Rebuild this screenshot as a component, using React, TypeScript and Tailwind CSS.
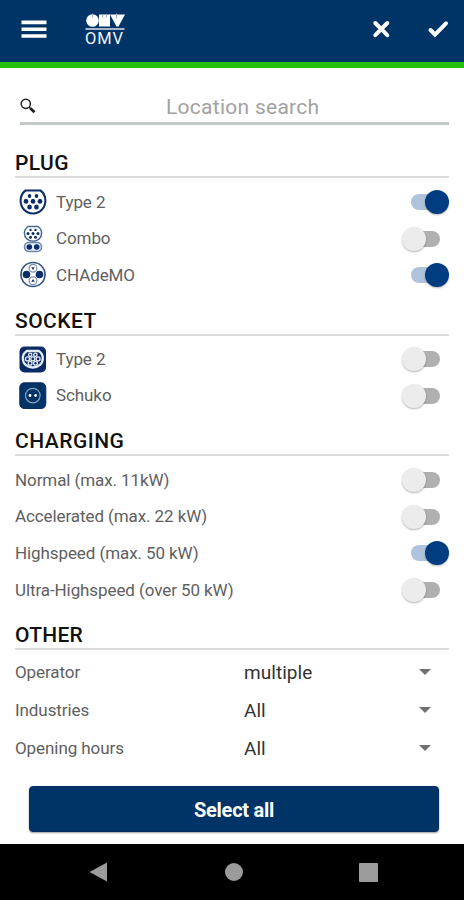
import type { ReactNode } from "react";

const FONT = "font-[Roboto,'Liberation_Sans',sans-serif]";
const NAVY = "#003366";
const INK = "#0b2d69";

function OmvLogo() {
  return (
    <div className="ml-[38px] flex w-[42px] flex-col">
      <svg className="h-[17px] w-[42px]" viewBox="0 0 42 17" fill="#fff">
        <circle cx="7.500" cy="7.500" r="6.300" />
        <path d="M14 1.500h11v12H14z" />
        <path d="M25 1.500h15L33.500 13.500h-2z" />
        <path d="M7.500 0.500v4M17.700 1.500v3M21.300 1.500v3M31.500 0.500v5" stroke="#9fb0cc" strokeWidth="1" />
        <path d="M0.500 16h39" stroke="#dbe2f0" strokeWidth="1.400" />
      </svg>
      <span className="h-[16px] text-[16.500px] leading-[17px] tracking-[0.900px] whitespace-nowrap text-[#f0f4fa]">OMV</span>
    </div>
  );
}

function Type2Plug() {
  return (
    <svg className="h-[28px] w-[28px]" viewBox="0 0 30 28" preserveAspectRatio="none">
      <path d="M7 2.500h16c3.300 2.300 5.300 5.900 5.300 10C28.300 20 22.500 25.500 15 25.500S1.700 20 1.700 12.500C1.700 8.400 3.700 4.800 7 2.500z" fill="#fff" stroke={INK} strokeWidth="2.200" />
      <g fill={INK}>
        <circle cx="11.300" cy="8" r="1.900" />
        <circle cx="18.700" cy="8" r="1.900" />
        <circle cx="7.500" cy="13.300" r="2.500" />
        <circle cx="15" cy="13.300" r="2.500" />
        <circle cx="22.500" cy="13.300" r="2.500" />
        <circle cx="11.300" cy="19" r="2.500" />
        <circle cx="18.700" cy="19" r="2.500" />
      </g>
    </svg>
  );
}

function ComboPlug() {
  return (
    <svg className="h-[28px] w-[20px]" viewBox="0 0 20 28">
      <path d="M5 1.500h10c2.400 1.700 3.600 3.900 3.600 6.500 0 4.900-3.700 8.200-8.600 8.200S1.400 12.900 1.400 8C1.400 5.400 2.600 3.200 5 1.500z" fill="#fff" stroke="#476792" strokeWidth="1.500" />
      <rect x="1.500" y="17.500" width="17" height="9" rx="4.200" fill="#e6edf5" stroke="#6d87a8" strokeWidth="1.500" />
      <g fill={INK}>
        <circle cx="7.500" cy="4.900" r="1.200" />
        <circle cx="12.500" cy="4.900" r="1.200" />
        <circle cx="5" cy="8.500" r="1.500" />
        <circle cx="10" cy="8.500" r="1.500" />
        <circle cx="15" cy="8.500" r="1.500" />
        <circle cx="7.500" cy="12.300" r="1.500" />
        <circle cx="12.500" cy="12.300" r="1.500" />
        <circle cx="6.300" cy="22" r="2.800" />
        <circle cx="13.700" cy="22" r="2.800" />
      </g>
    </svg>
  );
}

function ChademoPlug() {
  return (
    <svg className="h-[28px] w-[28px]" viewBox="0 0 28 28">
      <circle cx="14" cy="13.500" r="12" fill="#fff" stroke="#365781" strokeWidth="1.700" />
      <circle cx="14" cy="7.300" r="3.900" fill="#fff" stroke="#7790ae" strokeWidth="1.200" />
      <circle cx="14" cy="19.700" r="3.900" fill="#fff" stroke="#7790ae" strokeWidth="1.200" />
      <path d="M12.300 6.300h3.400L14 9zM12.300 20.700h3.400L14 18z" fill={INK} />
      <circle cx="7.500" cy="13.500" r="3.800" fill={INK} />
      <circle cx="20.500" cy="13.500" r="3.800" fill={INK} />
    </svg>
  );
}

function Type2Socket() {
  return (
    <svg className="h-[28px] w-[28px]" viewBox="0 0 28 28">
      <rect x="0.500" y="1.500" width="26.500" height="26" rx="5" fill="#0a2a66" />
      <path d="M7.800 6h12c2.700 1.800 4 4.500 4 7.200 0 5.600-4.300 9.300-10 9.300s-10-3.700-10-9.300c0-2.700 1.300-5.400 4-7.200z" fill="none" stroke="#e4ecf8" strokeWidth="2.300" />
      <g fill="#0a2a66" stroke="#e4ecf8" strokeWidth="1.300">
        <circle cx="11.200" cy="9.800" r="1.700" />
        <circle cx="16.400" cy="9.800" r="1.700" />
        <circle cx="8.500" cy="13.900" r="2" />
        <circle cx="13.800" cy="13.900" r="2" />
        <circle cx="19.100" cy="13.900" r="2" />
        <circle cx="11.100" cy="18.200" r="1.900" />
        <circle cx="16.500" cy="18.200" r="1.900" />
      </g>
    </svg>
  );
}

function SchukoSocket() {
  return (
    <svg className="h-[28px] w-[28px]" viewBox="0 0 28 28">
      <rect x="0.800" y="0.800" width="26" height="25.700" rx="4.500" fill={NAVY} stroke="#0a2a66" strokeWidth="1" />
      <circle cx="13.800" cy="13.600" r="7.300" fill="none" stroke="#8aa2bf" strokeWidth="1.200" />
      <circle cx="11" cy="13.500" r="1.400" fill="#fff" />
      <circle cx="16.600" cy="13.500" r="1.400" fill="#fff" />
    </svg>
  );
}

function Toggle({ on = false }: { on?: boolean }) {
  return (
    <div className={`flex h-6 w-[47px] items-center ${on ? "justify-end" : "justify-start"}`}>
      {on && <div className="-mr-3 h-4 w-[26px] rounded-l-full bg-[#afc3dc]" />}
      <div
        className={`z-10 size-6 shrink-0 rounded-full shadow-[0_1px_2px_rgba(0,0,0,0.3)] ${on ? "bg-[#003c80]" : "bg-[#ececec]"}`}
      />
      {!on && <div className="-ml-3 h-4 w-[26px] rounded-r-full bg-[#b0b0b0]" />}
    </div>
  );
}

function Heading({ children, spacing }: { children: ReactNode; spacing: string }) {
  return (
    <h2 className={`h-[29px] border-b-2 border-[#dcdcdc] text-[21px] leading-[29px] font-medium text-[#111] ${spacing}`}>
      {children}
    </h2>
  );
}

function SwitchRow({ icon, label, on }: { icon?: ReactNode; label: string; on?: boolean }) {
  return (
    <div className="flex h-[36.600px] items-center">
      {icon && <div className="mr-[6px] flex w-[35px] justify-center">{icon}</div>}
      <span className="flex-1 pt-[0.500px] text-[17px] tracking-[-0.090px] whitespace-nowrap text-[#606060]">{label}</span>
      <Toggle on={on} />
    </div>
  );
}

function SelectRow({ label, value }: { label: string; value: string }) {
  return (
    <div className="flex h-[38px] items-center">
      <span className="w-[229px] pt-px text-[17px] tracking-[-0.080px] text-[#606060]">{label}</span>
      <span className="flex-1 pt-[2px] text-[19px] tracking-[0.050px] text-[#333]">{value}</span>
      <svg className="mr-[18px] h-[6px] w-[12px]" viewBox="0 0 12 6">
        <path d="M0 0h12L6 6z" fill="#707070" />
      </svg>
    </div>
  );
}

export default function App() {
  return (
    <div className={`flex h-[900px] w-[464px] flex-col overflow-hidden bg-white ${FONT}`}>
      <header className="flex h-[68px] items-center border-b-6 border-[#24c00c] bg-[#003366] pl-[21px]">
        <svg className="mt-[-4px] h-[20px] w-[26px]" viewBox="0 0 26 20" fill="#fff">
          <path d="M0.500 1.500h25v3.800h-25zM0.500 8.500h25v3.600h-25zM0.500 15.300h25v3.500h-25z" />
        </svg>
        <div className="mt-[-3px]">
          <OmvLogo />
        </div>
        <svg className="mt-[-4px] ml-auto h-[20px] w-[20px]" viewBox="0 0 20 20">
          <path d="M4.300 4l12 12.200M16.300 4l-12 12.200" stroke="#fff" strokeWidth="4" strokeLinecap="round" />
        </svg>
        <svg className="mt-[-4px] mr-[14px] ml-[36px] h-[20px] w-[23px]" viewBox="0 0 23 20">
          <path d="M3.500 11l4.500 4.600L19 4.300" fill="none" stroke="#fff" strokeWidth="4" strokeLinecap="round" />
        </svg>
      </header>

      <main className="px-[15px]">
        <div className="mt-[24px] ml-[5px] flex h-[33px] w-[429px] items-start border-b-3 border-[#c5c8c9]">
          <svg className="mt-[6px] h-[16px] w-[16px]" viewBox="0 0 16 16" fill="none" stroke="#222">
            <circle cx="5.800" cy="5.800" r="4.600" strokeWidth="1.500" />
            <path d="M9.300 9.300l1.700 1.700" strokeWidth="1.600" />
            <path d="M10.300 10.300l4.200 4" strokeWidth="2.800" />
          </svg>
          <span className="ml-[130px] text-[21px] leading-[31px] tracking-[0.270px] whitespace-nowrap text-[#a2a2a2]">Location search</span>
        </div>

        <section className="mt-[24px]">
          <Heading spacing="tracking-[0.400px]">PLUG</Heading>
          <div className="mt-[6px]">
            <SwitchRow icon={<Type2Plug />} label="Type 2" on />
            <SwitchRow icon={<ComboPlug />} label="Combo" />
            <SwitchRow icon={<ChademoPlug />} label="CHAdeMO" on />
          </div>
        </section>

        <section className="mt-[13px]">
          <Heading spacing="tracking-[0.450px]">SOCKET</Heading>
          <div className="mt-[5.200px]">
            <SwitchRow icon={<Type2Socket />} label="Type 2" />
            <SwitchRow icon={<SchukoSocket />} label="Schuko" />
          </div>
        </section>

        <section className="mt-[12.800px]">
          <Heading spacing="tracking-[0.500px]">CHARGING</Heading>
          <div className="mt-[6px]">
            <SwitchRow label="Normal (max. 11kW)" />
            <SwitchRow label="Accelerated (max. 22 kW)" />
            <SwitchRow label="Highspeed (max. 50 kW)" on />
            <SwitchRow label="Ultra-Highspeed (over 50 kW)" />
          </div>
        </section>

        <section className="mt-[12.500px]">
          <Heading spacing="tracking-[0.250px]">OTHER</Heading>
          <div className="mt-[3px]">
            <SelectRow label="Operator" value="multiple" />
            <SelectRow label="Industries" value="All" />
            <SelectRow label="Opening hours" value="All" />
          </div>
        </section>
      </main>

      <button className="mt-[19px] ml-[29px] h-[46px] w-[410px] shrink-0 rounded-[4px] border border-[#0a2a66] bg-[#003366] text-[20px] leading-[46px] font-bold tracking-[-0.250px] text-white shadow-[0_1px_2px_rgba(0,0,0,0.4)]">
        Select all
      </button>

      <nav className="mt-auto flex h-[56px] shrink-0 items-center bg-black pl-[89px]">
        <svg className="h-[20px] w-[19px]" viewBox="0 0 19 20">
          <path d="M0.500 10L18 0.500v19z" fill="#9b9b9b" />
        </svg>
        <div className="ml-[117px] size-[18px] rounded-full bg-[#9b9b9b]" />
        <div className="ml-[116px] size-[19px] rounded-[1px] bg-[#9b9b9b]" />
      </nav>
    </div>
  );
}
